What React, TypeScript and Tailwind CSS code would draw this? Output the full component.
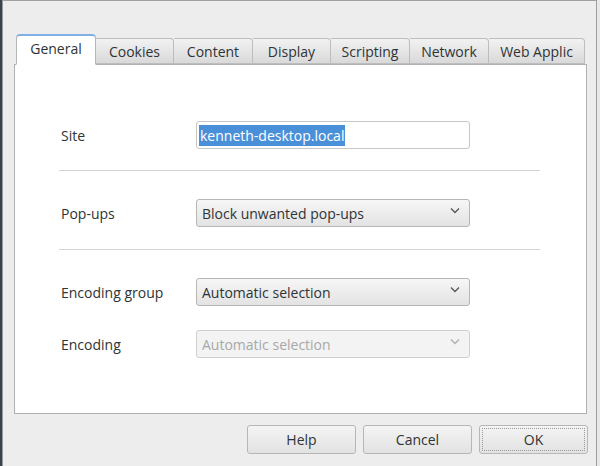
import React from "react";

const tabs = ["General", "Cookies", "Content", "Display", "Scripting", "Network", "Web Applic"];
const tabWidths = [80, 78, 79, 78, 79, 79, 96];

function Chevron({ muted }: { muted?: boolean }) {
  return (
    <svg width="10" height="7" viewBox="0 0 10 7" className="shrink-0 mb-[5px]">
      <path d="M1 1.5 L5 5.5 L9 1.5" fill="none" stroke={muted ? "#b0b0b0" : "#5a5a5a"} strokeWidth="1.4" />
    </svg>
  );
}

function Select({ value, disabled }: { value: string; disabled?: boolean }) {
  return (
    <div
      className={
        disabled
          ? "w-[274px] h-[28px] flex items-center justify-between pl-[5px] pr-[9px] rounded-[3px] border border-[#cfcfcf] bg-[#f3f3f3] text-[#a8a8a8]"
          : "w-[274px] h-[28px] flex items-center justify-between pl-[5px] pr-[9px] rounded-[3px] border border-[#b6b6b6] bg-gradient-to-b from-[#f6f6f6] to-[#e3e3e3] text-[#2e3436]"
      }
    >
      <span>{value}</span>
      <Chevron muted={disabled} />
    </div>
  );
}

function Row({ label, children }: { label: string; children: React.ReactNode }) {
  return (
    <div className="flex items-center h-[28px]">
      <div className="w-[135px] text-[#2e3436]">{label}</div>
      {children}
    </div>
  );
}

function Button({ label, focused }: { label: string; focused?: boolean }) {
  return (
    <div className="w-[109px] h-[29px] rounded-[3px] border border-[#b6b6b6] bg-gradient-to-b from-[#f4f4f4] to-[#e2e2e2] p-[2px]">
      <div
        className={
          focused
            ? "w-full h-full flex items-center justify-center border border-dotted border-[#9a9a9a] text-[#2e3436]"
            : "w-full h-full flex items-center justify-center text-[#2e3436]"
        }
      >
        {label}
      </div>
    </div>
  );
}

export default function App() {
  return (
    <div
      className="w-[600px] h-[466px] flex bg-[#e8e8e8] text-[14px] overflow-hidden"
      style={{ fontFamily: '"Open Sans", "DejaVu Sans", sans-serif' }}
    >
      <div className="w-[3px] bg-[#3a4350] border-r border-[#9a9a9a]" />
      <div className="w-[594px] h-full flex flex-col bg-[#ededed] border-t border-r border-[#a0a0a0]">
        {/* tab strip */}
        <div className="flex items-end h-[63px] pl-[13px] pt-[33px]">
          {tabs.map((t, i) =>
            i === 0 ? (
              <div
                key={t}
                style={{ width: tabWidths[i] }}
                className="h-[31px] -mb-px relative z-10 flex items-center justify-center bg-white border border-[#b6b6b6] border-b-white border-t-2 border-t-[#7fb0e6] rounded-t-[4px] text-[#2e3436] pb-[3px]"
              >
                {t}
              </div>
            ) : (
              <div
                key={t}
                style={{ width: tabWidths[i] }}
                className="h-[26px] flex items-center justify-center bg-gradient-to-b from-[#f2f2f2] to-[#d9d9d9] border border-[#bdbdbd] border-l-0 rounded-tr-[4px] text-[#2e3436] whitespace-nowrap overflow-hidden"
              >
                {t}
              </div>
            )
          )}
        </div>

        {/* page */}
        <div className="ml-[11px] w-[573px] h-[350px] bg-white border border-[#b0b0b0] pl-[46px] pt-[56px]">
          <Row label="Site">
            <div className="w-[274px] h-[28px] flex items-center pl-[2px] rounded-[3px] border border-[#c6c6c6] bg-white">
              <span className="bg-[#4a90d9] text-white leading-[21px] px-px">kenneth-desktop.local</span>
            </div>
          </Row>
          <div className="w-[481px] h-px bg-[#d4d4d4] -ml-[2px] mt-[21px] mb-[28px]" />
          <Row label="Pop-ups">
            <Select value="Block unwanted pop-ups" />
          </Row>
          <div className="w-[481px] h-px bg-[#d4d4d4] -ml-[2px] mt-[22px] mb-[28px]" />
          <div className="flex flex-col gap-[24px]">
            <Row label="Encoding group">
              <Select value="Automatic selection" />
            </Row>
            <Row label="Encoding">
              <Select value="Automatic selection" disabled />
            </Row>
          </div>
        </div>

        {/* buttons */}
        <div className="flex justify-end gap-[7px] pr-[8px] mt-[11px]">
          <Button label="Help" />
          <Button label="Cancel" />
          <Button label="OK" focused />
        </div>
      </div>
    </div>
  );
}
